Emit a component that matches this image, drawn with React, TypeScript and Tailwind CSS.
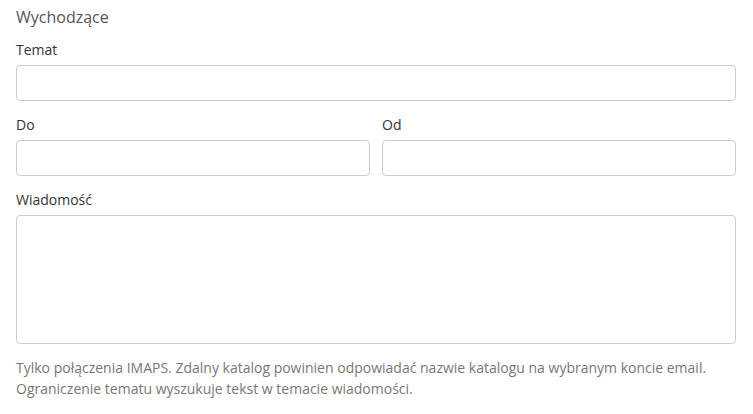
import React from "react";

export default function App() {
  const font = { fontFamily: '"Open Sans", sans-serif' };
  return (
    <div className="bg-white w-[753px] h-[414px] px-4 pt-[5px]" style={font}>
      <div className="text-[16px] leading-[24px] text-[#555]">Wychodzące</div>
      <div className="mt-[11px] text-[14px] leading-[20px] text-[#333]">Temat</div>
      <div className="mt-[5px] h-[36px] w-[720px] rounded border border-[#ccc]"></div>
      <div className="mt-[14px] flex gap-[12px] w-[720px]">
        <div className="flex-1">
          <div className="text-[14px] leading-[20px] text-[#333]">Do</div>
          <div className="mt-[5px] h-[36px] rounded border border-[#ccc]"></div>
        </div>
        <div className="flex-1">
          <div className="text-[14px] leading-[20px] text-[#333]">Od</div>
          <div className="mt-[5px] h-[36px] rounded border border-[#ccc]"></div>
        </div>
      </div>
      <div className="mt-[14px] text-[14px] leading-[20px] text-[#333]">Wiadomość</div>
      <div className="mt-[5px] h-[129px] w-[720px] rounded border border-[#ccc]"></div>
      <div className="mt-[13px] text-[14px] leading-[21px] text-[#777]">
        Tylko połączenia IMAPS. Zdalny katalog powinien odpowiadać nazwie katalogu na wybranym koncie email.
        <br />
        Ograniczenie tematu wyszukuje tekst w temacie wiadomości.
      </div>
    </div>
  );
}
